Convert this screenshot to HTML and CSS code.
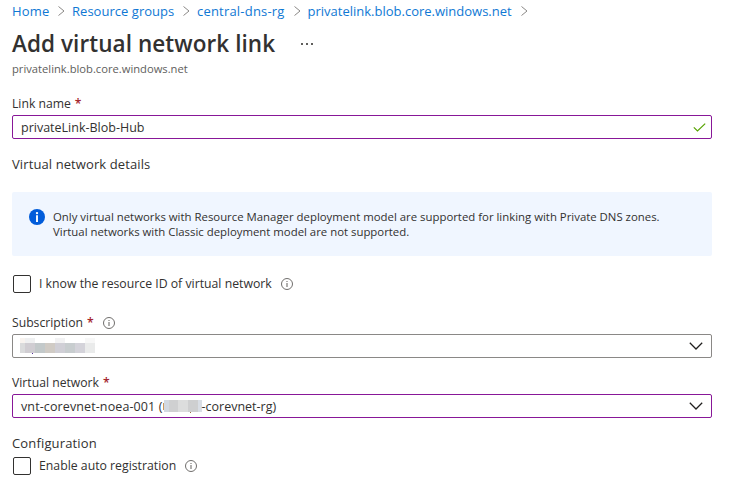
FILE: index.html
```html
<!DOCTYPE html>
<html lang="en">
<head>
<meta charset="utf-8">
<title>Add virtual network link</title>
<link rel="stylesheet" href="styles.css">
</head>
<body>
<svg class="defs" width="0" height="0" aria-hidden="true">
  <symbol id="crumb" viewBox="0 0 8 12"><path d="M.5 1.500 6 6 .5 10.500" fill="none" stroke="#8a8886"/></symbol>
  <symbol id="down" viewBox="0 0 14 8"><path d="M.8.8 7 7 13.200.8" fill="none" stroke="#201f1e" stroke-width="1.25"/></symbol>
  <symbol id="info" viewBox="0 0 12 12"><circle cx="6" cy="6" r="5.500" fill="none" stroke="#706e6c"/><path d="M6 5v4M6 3v1.100" stroke="#706e6c" stroke-width="1.100"/></symbol>
</svg>
<main class="blade">
  <nav class="breadcrumb">
    <a class="c1">Home</a><svg><use href="#crumb"/></svg>
    <a class="c2">Resource groups</a><svg><use href="#crumb"/></svg>
    <a class="c3">central-dns-rg</a><svg><use href="#crumb"/></svg>
    <a class="c4">privatelink.blob.core.windows.net</a><svg><use href="#crumb"/></svg>
  </nav>
  <header class="heading">
    <h1>Add virtual network link</h1>
    <svg class="more" width="12" height="2" viewBox="0 0 12 2"><path d="M0 0h2v2H0zM5 0h2v2H5zM10 0h2v2h-2z" fill="#605e5c"/></svg>
  </header>
  <p class="subtitle">privatelink.blob.core.windows.net</p>

  <div class="label link-label"><span>Link name</span><b>*</b></div>
  <div class="field active"><span class="value">privateLink-Blob-Hub</span>
    <svg class="check" width="13" height="9" viewBox="0 0 13 9"><path d="M.8 4.300 4.500 8 12.200.6" fill="none" stroke="#57a300" stroke-width="1.200"/></svg>
  </div>

  <h2 class="details">Virtual network details</h2>
  <section class="notice">
    <svg width="16" height="16" viewBox="0 0 16 16"><circle cx="8" cy="8" r="8" fill="#015cda"/><circle cx="8" cy="4.100" r="1.200" fill="#fff"/><path d="M8 6.300v6.700" stroke="#fff" stroke-width="1.900"/></svg>
    <p><span>Only virtual networks with Resource Manager deployment model are supported for linking with Private DNS zones.</span><br><span>Virtual networks with Classic deployment model are not supported.</span></p>
  </section>

  <label class="option know"><i class="box"></i><span>I know the resource ID of virtual network</span><svg class="info"><use href="#info"/></svg></label>

  <div class="label sub-label"><span>Subscription</span><b>*</b><svg class="info"><use href="#info"/></svg></div>
  <div class="field">
    <svg class="redacted" width="75" height="15" viewBox="0 0 75 15" shape-rendering="crispEdges">
      <path d="M0 0h5v5H0z" fill="#f8f3ef"/><path d="M5 0h10v5H5z" fill="#eff0f1"/><path d="M35 0h10v5H35z" fill="#f2f2f3"/><path d="M65 0h10v5H65z" fill="#f7f7f7"/>
      <path d="M0 5h5v10H0z" fill="#dadbdc"/><path d="M5 5h10v10H5z" fill="#d0cdd2"/><path d="M15 5h10v10H15z" fill="#c3c9ca"/><path d="M25 5h10v10H25z" fill="#d0cbc5"/><path d="M35 5h10v10H35z" fill="#d0cfd6"/><path d="M45 5h10v10H45z" fill="#c8cdcf"/><path d="M55 5h10v10H55z" fill="#d4d3da"/><path d="M65 5h10v10H65z" fill="#eaebeb"/><path d="M12 15h1v1h-1z" fill="#55329a"/>
    </svg>
    <svg class="down"><use href="#down"/></svg>
  </div>

  <div class="label net-label"><span>Virtual network</span><b>*</b></div>
  <div class="field active"><span class="vnt">vnt-corevnet-noea-001 (</span>
    <svg class="mask" width="39" height="14" viewBox="0 0 39 14" shape-rendering="crispEdges"><path d="M0 3h1v7H0z" fill="#c9985f"/><path d="M1 0h5v12H1z" fill="#d3d9e1"/><path d="M6 0h9v12H6z" fill="#cfd0d1"/><path d="M15 0h10v12H15z" fill="#dcdddd"/><path d="M25 0h10v12H25z" fill="#cecfd0"/><path d="M35 0h4v12h-4z" fill="#d9dee5"/><path d="M27 12h1v1h-1z" fill="#9b7044"/></svg><span class="value">-corevnet-rg)</span>
    <svg class="down"><use href="#down"/></svg>
  </div>

  <h2 class="config">Configuration</h2>
  <label class="option"><i class="box"></i><span>Enable auto registration</span><svg class="info auto"><use href="#info"/></svg></label>
</main>
</body>
</html>
```
FILE: styles.css
```css
* { box-sizing: border-box; }
body {
  margin: 0;
  background: #fff;
  color: #323130;
  font: 12.5px/18px "Open Sans", "Noto Sans", sans-serif;
}
.defs { position: absolute; }
h1, h2, p { margin: 0; font-weight: 400; }
svg { flex: none; display: block; }
span, a, h1 { white-space: nowrap; }
.blade { width: 736px; height: 488px; padding: 0 24px 0 12px; overflow: hidden; }
.breadcrumb { display: flex; align-items: center; height: 22px; font-size: 13px; color: #0f78d4; }
.breadcrumb svg { width: 8px; height: 12px; margin: 0 6px 0 8px; }
.breadcrumb a { flex: none; }
.c1 { width: 38px; letter-spacing: .2px; }
.c2 { width: 103px; letter-spacing: .03px; }
.c3 { width: 88.5px; letter-spacing: .2px; }
.c4 { width: 205px; }
.heading { display: flex; align-items: center; height: 39px; padding-top: 5px; }
h1 { width: 289px; font-size: 22.500px; font-weight: 600; line-height: 34px; letter-spacing: .07px; }
.subtitle { height: 16px; font-size: 11.200px; line-height: 15px; color: #605e5c; }
.label { display: flex; align-items: center; height: 18px; padding-top: 2px; font-size: 12.200px; }
.label b { margin-left: 4px; color: #a4262c; font-weight: 600; }
.link-label { margin: 17px 0 3px; }
.field { display: flex; align-items: center; height: 24px; padding-left: 8px; border: 1px solid #8a8886; border-radius: 2px; }
.active { border-color: #881798; }
.value, .vnt { padding-top: 1px; }
.vnt { letter-spacing: .11px; }
.check { margin: 0 5px 0 auto; }
.down { width: 14px; height: 8px; margin: 0 8px 0 auto; }
.info { width: 12px; height: 12px; margin-left: 9px; }
.details { height: 18px; margin: 16px 0 19px; padding-top: 1px; font-size: 13px; letter-spacing: .1px; line-height: 17px; }
.notice { display: flex; height: 64px; padding: 17px 17px; border-radius: 2px; background: #f0f6ff; font-size: 11.380px; line-height: 15px; }
.notice p { margin-left: 8px; }
.option { display: flex; align-items: center; height: 18px; font-size: 12.280px; }
.know { margin: 19px 0 20px; }
.box { width: 18px; height: 18px; margin: 0 8px 0 1px; border: 1px solid #323130; border-radius: 2px; }
.sub-label { margin-bottom: 3px; }
.redacted { margin: -1px 0 0 -1px; overflow: visible; }
.net-label { margin: 15px 0 3px; }
.mask { margin-top: 2px; }
.config { height: 18px; margin: 16px 0 5px; font-size: 13px; letter-spacing: .15px; }
```
